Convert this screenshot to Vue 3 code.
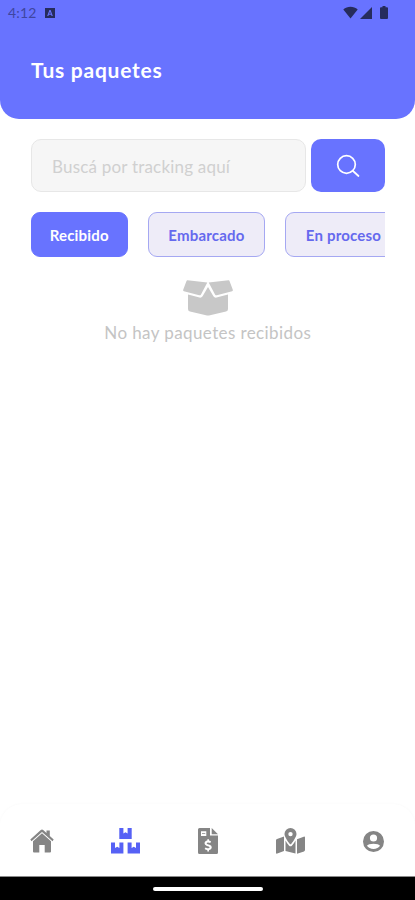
<template>
  <div class="screen">
    <header class="header">
      <div class="status-bar">
        <div class="status-left">
          <span class="clock">4:12</span>
          <svg width="10" height="10" viewBox="0 0 10 10">
            <path fill-rule="evenodd" d="M0 0h10v10H0zM4.4 2 2.2 8h1.2l.4-1.2h2.4L6.6 8h1.2L5.6 2zM5 3.6l.8 2.2H4.2z" />
          </svg>
        </div>
        <div class="status-right">
          <svg width="15" height="13" viewBox="0 0 15 13">
            <path d="M.3 3.4C4.3 0 10.7 0 14.7 3.4L7.5 12.5z" />
          </svg>
          <svg class="signal" width="12" height="12" viewBox="0 0 12 12">
            <path d="M12 0v12H0z" />
          </svg>
          <svg class="battery" width="8" height="13" viewBox="0 0 8 13">
            <path d="M2.5 0h3v1.2H7q1 0 1 1V12q0 1-1 1H1q-1 0-1-1V2.2q0-1 1-1h1.5z" />
          </svg>
        </div>
      </div>
      <h1 class="title">Tus paquetes</h1>
    </header>

    <main class="content">
      <div class="search">
        <input v-model="tracking" class="search-input" type="text" placeholder="Buscá por tracking aquí" />
        <button class="search-button" aria-label="Buscar">
          <svg width="24" height="24" viewBox="0 0 24 24" fill="none" stroke="#fff" stroke-width="1.7" stroke-linecap="round">
            <circle cx="10.5" cy="10.5" r="8.8" />
            <path d="M17 17l5.5 5" />
          </svg>
        </button>
      </div>

      <div class="filters">
        <button
          v-for="(filter, index) in filters"
          :key="filter"
          class="filter"
          :class="{ selected: selectedFilter === index }"
          @click="selectedFilter = index"
        >
          {{ filter }}
        </button>
      </div>

      <!-- Sin resultados -->
      <div class="empty">
        <svg width="50" height="36" viewBox="0 0 50 36" fill="#c8c8c8">
          <path d="M4.5 .3 24.3 2.6 18 14.5Q17.3 15.6 16.2 15.3L.9 11.2Q-.2 10.8.2 9.8L3.5 1Q3.8.2 4.5.3z" />
          <path d="M45.5 .3 25.7 2.6 32 14.5Q32.7 15.6 33.8 15.3L49.1 11.2Q50.2 10.8 49.8 9.8L46.5 1Q46.2.2 45.5.3z" />
          <path d="M5 14.5 16.5 17.6Q18.5 18 19.6 16.2L25 7 30.4 16.2Q31.5 18 33.5 17.6L45 14.5V29Q45 31 43 31.5L27 35.2Q25 35.7 23 35.2L7 31.5Q5 31 5 29z" />
        </svg>
        <p class="empty-text">No hay paquetes recibidos</p>
      </div>
    </main>

    <nav class="nav">
      <a
        v-for="(tab, index) in tabs"
        :key="tab.name"
        class="tab"
        :class="{ active: selectedTab === index }"
        :aria-label="tab.name"
        @click="selectedTab = index"
      >
        <svg :width="tab.width" :height="tab.height" :viewBox="`0 0 ${tab.width} ${tab.height}`">
          <path fill-rule="evenodd" :d="tab.path" />
        </svg>
      </a>
    </nav>
    <div class="system-bar">
      <div class="handle"></div>
    </div>
  </div>
</template>

<script setup>
import { ref } from 'vue';

const tracking = ref('');

const filters = ['Recibido', 'Embarcado', 'En proceso'];
const selectedFilter = ref(0);

const selectedTab = ref(1);
const tabs = [
  {
    name: 'Inicio',
    width: 24,
    height: 24,
    path: 'M12 .5Q12.7.5 13.2 1L16.5 4V1.5H19.8V7L23.7 10.5 22.5 12.2 12 2.9 1.5 12.2.3 10.5 10.8 1Q11.3.5 12 .5zM12 4.2 21 12.2V22.5Q21 23.5 20 23.5H14.7V16H9.3V23.5H4Q3 23.5 3 22.5V12.2z',
  },
  {
    name: 'Paquetes',
    width: 29,
    height: 26,
    path: 'M8.3 0H12.4V5.5L14.5 4.3 16.6 5.5V0H20.7V11H8.3zM0 14.5H4V20L6.2 18.8 8.4 20V14.5H12.4V25.5H0zM16.6 14.5H20.6V20L22.8 18.8 25 20V14.5H29V25.5H16.6z',
  },
  {
    name: 'Facturas',
    width: 20,
    height: 26,
    path: 'M1.5 0H12V7.5H20V24.5Q20 26 18.5 26H1.5Q0 26 0 24.5V1.5Q0 0 1.5 0zM13.7 0 20 6.2H13.7zM3 3.2V8H8.3V3.2zM4 5.2H7.3V6H4zM9.3 11.2V12.6C5.7 13.2 5.8 17 8.9 17.9L10.7 18.5C12.2 19 11.8 20.3 10.2 20.3 9 20.3 8.4 20 7.6 19.5L6.6 20.9Q7.8 21.8 9.3 22V23.5H11V22C14.7 21.4 14.5 17.6 11.5 16.7L9.7 16.2C8.1 15.7 8.5 14.4 10 14.4 11 14.4 11.5 14.6 12.2 15L13.1 13.6Q12.1 12.8 11 12.6V11.2z',
  },
  {
    name: 'Mapa',
    width: 29,
    height: 26,
    path: 'M14.5 0A6 6 0 0 1 20.5 6C20.5 8.8 16.8 13.9 15.2 15.9Q14.5 16.7 13.8 15.9C12.2 13.9 8.5 8.8 8.5 6A6 6 0 0 1 14.5 0zM14.5 3.9A2.2 2.2 0 1 0 14.5 8.3 2.2 2.2 0 1 0 14.5 3.9zM0 12.3Q0 11.3 1 10.9L8 8.5V23L1.3 25.6Q0 26 0 24.8zM9.5 12.5Q11 15.5 13.1 17.7 14.5 19 15.9 17.7 18 15.5 19.5 12.5V25.6L9.5 22.9zM21 11.2 27.7 8.7Q29 8.3 29 9.5V22Q29 23 28 23.4L21 25.8z',
  },
  {
    name: 'Perfil',
    width: 21,
    height: 21,
    path: 'M10.5 0A10.5 10.5 0 1 1 10.5 21 10.5 10.5 0 1 1 10.5 0zM10.5 3.4A3.6 3.6 0 1 0 10.5 10.6 3.6 3.6 0 1 0 10.5 3.4zM4 14.8C6 18.9 15 18.9 17 14.8 16 12 5 12 4 14.8z',
  },
];
</script>

<style>
body {
  margin: 0;
  background: #fff;
}
</style>

<style scoped>
.screen {
  display: flex;
  flex-direction: column;
  height: 900px;
  overflow: hidden;
  background: #fff;
  font-family: Lato, "Liberation Sans", sans-serif;
}

.header {
  height: 118.5px;
  background: #6873ff;
  border-radius: 0 0 19px 19px;
}

.status-bar {
  display: flex;
  justify-content: space-between;
  align-items: center;
  height: 25px;
  padding: 0 27px 0 8px;
  color: #3f469f;
}

.status-left,
.status-right {
  display: flex;
  align-items: center;
  fill: #262c5c;
}

.clock {
  margin-right: 8px;
  font-size: 14px;
  letter-spacing: 0.2px;
}

.signal {
  margin-left: 2px;
}

.battery {
  margin-left: 8px;
}

.title {
  margin: 32px 0 0 31px;
  color: #fff;
  font-size: 21px;
  font-weight: 700;
  line-height: 26px;
  letter-spacing: 0.75px;
}

.content {
  flex: 1;
  padding: 20.5px 30px 0 30.5px;
}

.search {
  display: flex;
  gap: 5px;
  height: 53px;
}

.search-input {
  flex: 1;
  min-width: 0;
  box-sizing: border-box;
  padding: 2px 20.5px 0;
  border: 1px solid #e7e7e7;
  border-radius: 10px;
  background: #f6f6f6;
  font-family: inherit;
  font-size: 17px;
  letter-spacing: 0.2px;
  outline: none;
}

.search-input::placeholder {
  color: #d0d0d0;
}

.search-button {
  display: flex;
  justify-content: center;
  align-items: center;
  width: 74.5px;
  padding: 0;
  border: none;
  border-radius: 10px;
  background: #6873ff;
}

.filters {
  display: flex;
  gap: 20px;
  margin-top: 20px;
  overflow: hidden;
}

.filter {
  flex: none;
  box-sizing: border-box;
  width: 117px;
  height: 45px;
  padding: 1px 0 0;
  border: 1px solid #a5a8f2;
  border-radius: 9px;
  background: #eeecf8;
  color: #6569ee;
  font-family: inherit;
  font-size: 15px;
  font-weight: 700;
  letter-spacing: 0.2px;
}

.filter.selected {
  width: 97.5px;
  border-color: #6873ff;
  background: #6873ff;
  color: #fff;
}

.empty {
  display: flex;
  flex-direction: column;
  align-items: center;
  padding-top: 22.5px;
}

.empty-text {
  margin: 5px 0 0;
  color: #c4c4c4;
  font-size: 17px;
  line-height: 24px;
  letter-spacing: 0.4px;
}

.nav {
  display: flex;
  justify-content: space-between;
  align-items: center;
  box-sizing: border-box;
  height: 73px;
  padding: 2px 31px 0 29.5px;
  border-bottom: 1px solid #8a8a8a;
  border-radius: 22px 22px 0 0;
  background: #fff;
  box-shadow: 0 0 3px rgba(0, 0, 0, 0.03);
}

.tab {
  display: flex;
  fill: #858585;
  cursor: pointer;
}

.tab.active {
  fill: #5661f5;
}

.system-bar {
  display: flex;
  justify-content: center;
  align-items: center;
  height: 23px;
  background: #000;
}

.handle {
  width: 110px;
  height: 4px;
  border-radius: 2px;
  background: #fff;
}
</style>
